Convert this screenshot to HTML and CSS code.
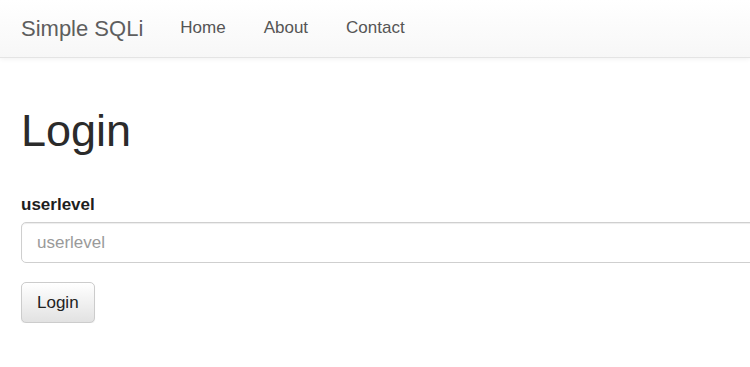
FILE: index.html
```html
<!DOCTYPE html>
<html lang="en">
<head>
  <meta charset="UTF-8" />
  <meta name="viewport" content="width=device-width, initial-scale=1.0" />
  <title>Simple SQLi</title>
  <link rel="stylesheet" href="styles.css">
</head>
<body>
  <nav class="navbar">
    <a class="brand" href="#">Simple SQLi</a>
    <ul class="nav-links">
      <li><a href="#">Home</a></li>
      <li><a href="#">About</a></li>
      <li><a href="#">Contact</a></li>
    </ul>
  </nav>
  <div class="container">
    <h1>Login</h1>
    <form action="#" method="post">
      <label for="userlevel">userlevel</label>
      <input type="text" id="userlevel" name="userlevel" class="form-control" placeholder="userlevel" />
      <button type="submit" class="btn">Login</button>
    </form>
  </div>
</body>
</html>
```

FILE: styles.css
```css
html, body {
  overflow: hidden;
}
body {
  margin: 0;
  background: #fff;
  font-family: 'Liberation Sans', Arial, sans-serif;
  color: #333;
}
.navbar {
  display: flex;
  align-items: center;
  height: 57px;
  padding-left: 21px;
  background-image: linear-gradient(to bottom, #fff 0%, #f7f7f7 100%);
  border-bottom: 1px solid #e4e4e4;
  box-shadow: 0 1px 5px rgba(0,0,0,0.06);
}
.brand {
  font-size: 22px;
  line-height: 22px;
  color: #5e5e5e;
  text-decoration: none;
  margin-right: 18px;
}
.nav-links {
  display: flex;
  list-style: none;
  margin: 0;
  padding: 0 0 1px;
}
.nav-links a {
  display: block;
  padding: 0 19px;
  font-size: 17px;
  line-height: 20px;
  color: #555;
  text-decoration: none;
}
/* form column, input runs off the right edge like the original */
.container {
  padding-left: 21px;
  overflow: hidden;
}
.container h1 {
  font-size: 45px;
  line-height: 48px;
  font-weight: normal;
  color: #2b2b2b;
  margin: 49px 0 40px;
}
.container label {
  display: block;
  font-size: 17px;
  line-height: 20px;
  font-weight: bold;
  color: #1e1e1e;
  margin-bottom: 7px;
}
.form-control {
  display: block;
  box-sizing: border-box;
  width: calc(100% + 40px);
  height: 41px;
  padding: 0 15px;
  font-family: inherit;
  font-size: 17px;
  color: #555;
  border: 1px solid #cfcfcf;
  border-radius: 5px;
  box-shadow: inset 0 1px 1px rgba(0,0,0,0.075);
}
.form-control::placeholder {
  color: #9a9a9a;
}
.btn {
  display: block;
  margin-top: 19px;
  height: 41px;
  padding: 0 15px;
  font-family: inherit;
  font-size: 17px;
  color: #222;
  background-image: linear-gradient(to bottom, #fff 0%, #e2e2e2 100%);
  border: 1px solid #ccc;
  border-radius: 5px;
  box-shadow: inset 0 1px 0 rgba(255,255,255,0.15), 0 1px 1px rgba(0,0,0,0.075);
  cursor: pointer;
}
```
